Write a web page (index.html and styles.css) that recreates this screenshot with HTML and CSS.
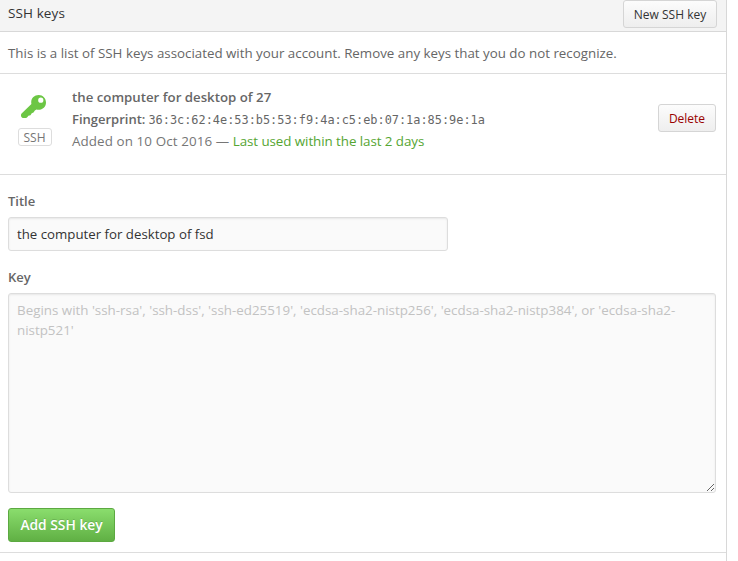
FILE: index.html
```html
<!DOCTYPE html>
<html lang="en">
<head>
<meta charset="utf-8">
<title>SSH keys</title>
<link rel="stylesheet" href="styles.css">
</head>
<body>
<main class="panel">
  <header class="panel-head">
    <h1 class="heading"><span>SSH keys</span></h1>
    <button class="btn btn-new" type="button"><span>New SSH key</span></button>
  </header>
  <p class="intro"><span>This is a list of SSH keys associated with your account. Remove any keys that you do not recognize.</span></p>
  <section class="key-row">
    <div class="key-type">
      <svg class="key-icon" viewBox="0 0 24 22" width="25" height="23" aria-hidden="true">
        <path fill-rule="evenodd" d="M17 0C13 0 9.800 3 9.800 6.800c0 .8.1 1.300.2 1.900L.6 17.800c-.6.7-.8 1.600-.5 2.500.3 1.100 1.200 1.700 2.300 1.700h2.100c.8 0 1.300-.3 1.700-.9l.9-1.200 2-.6 1.200-1.700 1.700-.9 1.300-1.900 1.500-.9c.7.2 1.400.2 2.100.2 4 0 7.100-3 7.100-7S21 0 17 0zm2 2.400a2.500 2.500 0 1 1 0 5 2.500 2.500 0 0 1 0-5z"/>
      </svg>
      <span class="badge">SSH</span>
    </div>
    <div class="key-info">
      <strong class="key-name"><span>the computer for desktop of 27</span></strong>
      <div class="key-print"><strong>Fingerprint:</strong><code>36:3c:62:4e:53:b5:53:f9:4a:c5:eb:07:1a:85:9e:1a</code></div>
      <div class="key-date"><span class="added">Added on 10 Oct 2016 — </span><span class="recent">Last used within the last 2 days</span></div>
    </div>
    <button class="btn btn-delete" type="button"><span>Delete</span></button>
  </section>
  <form class="key-form">
    <label class="label" for="title">Title</label>
    <input class="field title-field" id="title" type="text" value="the computer for desktop of fsd">
    <label class="label label-key" for="key">Key</label>
    <textarea class="field key-field" id="key" placeholder="Begins with 'ssh-rsa', 'ssh-dss', 'ssh-ed25519', 'ecdsa-sha2-nistp256', 'ecdsa-sha2-nistp384', or 'ecdsa-sha2-nistp521'"></textarea>
    <button class="btn btn-add" type="button"><span>Add SSH key</span></button>
  </form>
</main>
</body>
</html>
```
FILE: styles.css
```css
* { box-sizing: border-box; }
html, body { height: 100%; }
body {
  margin: 0;
  overflow: hidden;
  background: #fff;
  color: #666;
  font: 13.33px/20px "Open Sans", "Noto Sans", sans-serif;
}
.panel { width: 727px; height: 561px; border-right: 1px solid #d8d8d8; }
.panel-head {
  display: flex;
  justify-content: space-between;
  align-items: flex-start;
  height: 32px;
  padding: 0 9px 0 8px;
  background: #f4f4f4;
  border-bottom: 1px solid #d8d8d8;
}
.heading { margin: 3px 0 0; color: #333; font-size: 13.5px; line-height: 20px; font-weight: 500; letter-spacing: .1px; }
.btn {
  height: 28px;
  padding: 1px 0 0;
  border: 1px solid #d5d5d5;
  border-radius: 3px;
  background: linear-gradient(#fcfcfc, #eee);
  color: #333;
  font: 500 12px/20px "Open Sans", sans-serif;
  white-space: nowrap;
}
.btn-new { width: 94px; padding-top: 2px; }
.intro { margin: 0; height: 42px; padding: 11px 8px; border-bottom: 1px solid #ddd; white-space: nowrap; }
.key-row { display: flex; height: 101px; padding: 0 10px 0 18px; border-bottom: 1px solid #ddd; }
.key-type { display: flex; flex-direction: column; width: 54px; padding-top: 21px; }
.key-icon { margin-left: 3px; fill: #6cc644; }
.badge {
  width: 34px;
  height: 18px;
  margin-top: 10px;
  padding-right: 1px;
  border: 1px solid #ddd;
  border-radius: 3px;
  color: #767676;
  font-size: 12px;
  line-height: 17px;
  text-align: center;
}
.key-info { flex: 1; padding-top: 12px; line-height: 22px; white-space: nowrap; }
.key-info strong { font-weight: 600; }
.key-name { display: block; font-size: 13.25px; }
.key-print { display: flex; height: 22px; gap: 3px; font-size: 13px; }
.key-print code { font: 11.9px/24px "DejaVu Sans Mono", monospace; }
.key-date { color: #767676; font-size: 13.38px; }
.added { letter-spacing: .1px; }
.recent { color: #55a532; letter-spacing: -.07px; }
.btn-delete { width: 58px; margin-top: 30px; color: #900; }
.key-form { display: flex; flex-direction: column; align-items: flex-start; height: 378px; padding: 16px 10px 0 8px; border-bottom: 1px solid #ddd; }
.label { height: 20px; font-size: 13px; font-weight: 600; }
.label-key { margin-top: 16px; }
.field {
  margin: 6px 0 0;
  padding: 7px 8px;
  border: 1px solid #ddd;
  border-radius: 3px;
  outline: 0;
  background: #fafafa;
  box-shadow: inset 0 1px 2px rgba(0, 0, 0, .075);
  color: #333;
  font: 13.25px/20px "Open Sans", sans-serif;
}
.title-field { width: 440px; height: 34px; }
.key-field { width: 708px; height: 200px; padding-top: 6px; resize: both; font-size: 13.36px; }
.key-field::placeholder { color: #c2c2c2; }
.btn-add {
  width: 107px;
  height: 34px;
  margin-top: 15px;
  padding-top: 0;
  border-color: #5ca941;
  background: linear-gradient(#8add6d, #60b044);
  color: #fff;
  font-size: 13.8px;
  font-weight: 600;
  text-shadow: 0 -1px 0 rgba(0, 0, 0, .15);
}
```
